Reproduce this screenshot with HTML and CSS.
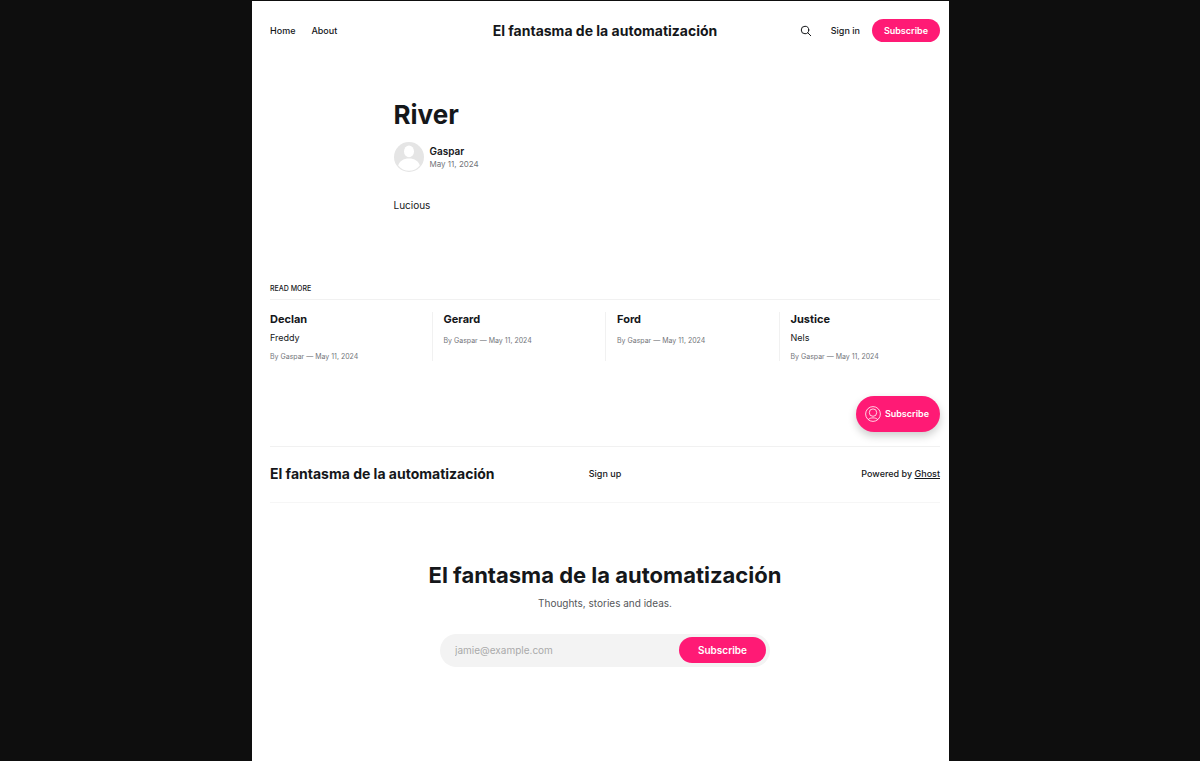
FILE: index.html
```
<!DOCTYPE html>
<html lang="es">
<head>
<meta charset="utf-8">
<meta name="viewport" content="width=device-width, initial-scale=1">
<title>River</title>
<link rel="stylesheet" href="styles.css">
</head>
<body>
<div class="page">
  <header class="header">
    <nav class="nav">
      <a href="#">Home</a>
      <a href="#">About</a>
    </nav>
    <a class="logo" href="#">El fantasma de la automatización</a>
    <div class="actions">
      <button class="search" type="button" aria-label="Search">
        <svg viewBox="0 0 24 24" width="12" height="12" fill="none" stroke="currentColor" stroke-width="2" stroke-linecap="round" stroke-linejoin="round"><circle cx="10" cy="10" r="7.5"/><path d="M15.5 15.5 21.5 21.5"/></svg>
      </button>
      <a class="signin" href="#">Sign in</a>
      <a class="button" href="#">Subscribe</a>
    </div>
  </header>

  <main>
    <article class="article">
      <h1 class="article-title">River</h1>
      <div class="author">
        <svg class="avatar" viewBox="0 0 30 30" width="30" height="30">
          <circle cx="15" cy="15" r="15" fill="#e5e5e5"/>
          <ellipse cx="15" cy="9.4" rx="5" ry="5.8" fill="#fff"/>
          <path d="M4.200 23.600C5.200 19 9.500 16.400 15 16.400S24.800 19 25.800 23.600A13.800 13.800 0 0 1 4.200 23.600Z" fill="#fff"/>
        </svg>
        <div>
          <div class="author-name">Gaspar</div>
          <time class="author-date" datetime="2024-05-11">May 11, 2024</time>
        </div>
      </div>
      <p class="article-text">Lucious</p>
    </article>

    <section class="more">
      <h2 class="more-title">READ MORE</h2>
      <div class="feed">
        <article class="card">
          <h3 class="card-title">Declan</h3>
          <p class="card-excerpt">Freddy</p>
          <p class="card-meta">By Gaspar — May 11, 2024</p>
        </article>
        <article class="card">
          <h3 class="card-title">Gerard</h3>
          <p class="card-meta">By Gaspar — May 11, 2024</p>
        </article>
        <article class="card">
          <h3 class="card-title">Ford</h3>
          <p class="card-meta">By Gaspar — May 11, 2024</p>
        </article>
        <article class="card">
          <h3 class="card-title">Justice</h3>
          <p class="card-excerpt">Nels</p>
          <p class="card-meta">By Gaspar — May 11, 2024</p>
        </article>
      </div>
    </section>

    <div class="portal">
      <button class="portal-button" type="button">
        <svg viewBox="0 0 16 16" width="16" height="16" fill="none" stroke="currentColor" stroke-width="0.800"><circle cx="8" cy="8" r="7.400"/><circle cx="8" cy="6.600" r="3.700"/><path d="M3.300 13.500C4.500 12.300 6.100 11.900 8 11.900S11.500 12.300 12.700 13.500"/></svg>
        Subscribe
      </button>
    </div>
  </main>

  <footer>
    <div class="footer-bar">
      <a class="logo" href="#">El fantasma de la automatización</a>
      <a href="#">Sign up</a>
      <div class="powered">Powered by <a class="ghost" href="#">Ghost</a></div>
    </div>
    <section class="signup">
      <h2 class="signup-title">El fantasma de la automatización</h2>
      <p class="signup-text">Thoughts, stories and ideas.</p>
      <form class="form">
        <input class="email" type="email" placeholder="jamie@example.com" aria-label="Email">
        <button class="form-button" type="submit">Subscribe</button>
      </form>
    </section>
  </footer>
</div>
</body>
</html>
```
FILE: styles.css
```
* {
  box-sizing: border-box;
}

html {
  background: #0e0e0e;
}

body {
  margin: 0;
  padding: 1px 0 0 1px;
  color: #15171a;
  font: 500 9px/12px Inter, "Liberation Sans", sans-serif;
}

h1, h2, h3, p {
  margin: 0;
}

a {
  color: inherit;
  text-decoration: none;
}

button, input {
  border: 0;
  font: inherit;
}

.page {
  max-width: 697px;
  min-height: calc(100vh - 1px);
  margin: 0 auto;
  padding: 0 9px 0 18px;
  background: #fff;
}

.header {
  display: grid;
  grid-template-columns: 1fr auto 1fr;
  align-items: center;
  padding: 18px 0;
}

.nav {
  display: flex;
  gap: 16px;
}

.logo {
  font-size: 14px;
  font-weight: 700;
  line-height: 20px;
}

.actions {
  display: flex;
  align-items: center;
  justify-content: flex-end;
}

.search {
  display: flex;
  margin-right: 19px;
  padding: 0;
  background: none;
  color: inherit;
}

.signin {
  margin-right: 12px;
}

.button {
  padding: 6px 12px 5px;
  border-radius: 12px;
  background: #ff1a75;
  color: #fff;
  font-weight: 600;
}

.article {
  max-width: 423px;
  margin: 0 auto;
  padding-top: 39px;
}

.article-title {
  font-size: 26px;
  font-weight: 700;
  line-height: 32px;
}

.author {
  display: flex;
  align-items: center;
  gap: 6px;
  margin-top: 11px;
}

.author-name {
  font-size: 10px;
  font-weight: 600;
  line-height: 13px;
}

.author-date {
  display: block;
  color: #73757a;
  font-size: 8px;
  font-weight: 400;
}

.article-text {
  margin-top: 25px;
  font-size: 10px;
  font-weight: 400;
  line-height: 16px;
}

.more {
  padding-top: 70px;
}

.more-title {
  padding-bottom: 4px;
  border-bottom: 1px solid #f1f1f1;
  font-size: 7px;
  font-weight: 500;
}

.feed {
  display: grid;
  grid-template-columns: repeat(4, 1fr);
  gap: 24px;
  margin-top: 12px;
}

.card + .card {
  margin-left: -12px;
  padding-left: 11px;
  border-left: 1px solid #f1f1f1;
}

.card-title {
  font-size: 11px;
  font-weight: 700;
  line-height: 14px;
}

.card-excerpt {
  margin-top: 6px;
  font-weight: 400;
}

.card-meta {
  margin-top: 11px;
  color: #73757a;
  font-size: 7px;
  font-weight: 400;
  line-height: 8px;
}

.card-excerpt + .card-meta {
  margin-top: 9px;
}

.portal {
  display: flex;
  justify-content: flex-end;
  padding: 35px 0 14px;
}

.portal-button {
  display: flex;
  align-items: center;
  gap: 4px;
  padding: 10px 11px 10px 9px;
  border-radius: 18px;
  background: #ff1a75;
  box-shadow: 0 4px 8px rgba(0, 0, 0, 0.2);
  color: #fff;
  font-size: 9px;
  font-weight: 600;
}

.footer-bar {
  display: grid;
  grid-template-columns: 1fr auto 1fr;
  align-items: center;
  padding: 17px 0 18px;
  border-top: 1px solid #f1f1f1;
  border-bottom: 1px solid #f6f6f6;
}

.powered {
  text-align: right;
}

.ghost {
  text-decoration: underline;
}

.signup {
  display: flex;
  flex-direction: column;
  align-items: center;
  padding: 56px 0;
}

.signup-title {
  font-size: 22px;
  font-weight: 700;
  line-height: 32px;
}

.signup-text {
  margin-top: 4px;
  color: #55575a;
  font-size: 10px;
  font-weight: 400;
  line-height: 16px;
}

.form {
  display: flex;
  align-items: center;
  width: 100%;
  max-width: 330px;
  margin-top: 23px;
  padding: 3px 4px 4px 15px;
  border-radius: 17px;
  background: #f3f3f3;
}

.email {
  flex: 1;
  min-width: 0;
  padding: 0;
  background: none;
  font-size: 10px;
  font-weight: 400;
}

.email::placeholder {
  color: #aaa;
}

.form-button {
  padding: 7px 19px;
  border-radius: 13px;
  background: #ff1a75;
  color: #fff;
  font-size: 10px;
  font-weight: 600;
}
```
